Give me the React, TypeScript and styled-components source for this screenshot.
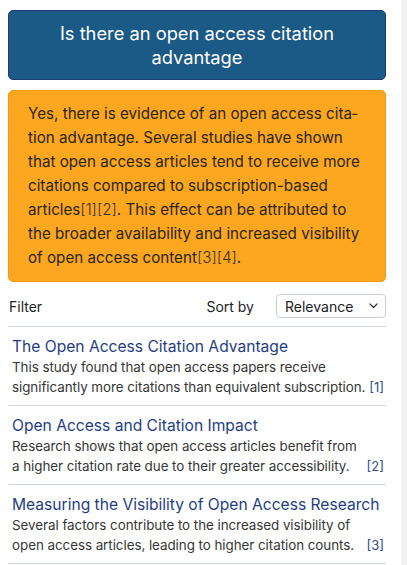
import styled, { createGlobalStyle } from 'styled-components';

const GlobalStyle = createGlobalStyle`
    html, body {
        margin: 0;
        padding: 0;
        background: #ffffff;
    }
    body {
        font-family: Inter, "Noto Sans", "Liberation Sans", sans-serif;
        -webkit-font-smoothing: antialiased;
    }
`;

const Page = styled.div`
    display: flex;
    min-height: 100vh;
`;

const Main = styled.main`
    flex: 1;
    padding: 10px 15px 0 8px;
`;

const Gutter = styled.div`
    width: 6px;
    background: #f2f2f2;
`;

const Question = styled.h1`
    margin: 0;
    padding: 10px 16px;
    background: #1b5987;
    border: 1px solid #1c3d72;
    border-radius: 5px;
    color: #ffffff;
    font-size: 18.3px;
    font-weight: 400;
    line-height: 24px;
    text-align: center;
`;

const Answer = styled.p`
    margin: 10px 0 0;
    padding: 11px 18px 11px 19px;
    background: #fda61f;
    border: 1px solid #f39a12;
    border-radius: 5px;
    color: #2b2612;
    font-size: 15.2px;
    line-height: 24px;
    hyphens: manual;
`;

const Ref = styled.span`
    font-weight: 300;
    color: #3a3320;
`;

const Toolbar = styled.div`
    display: flex;
    align-items: center;
    margin-top: 12px;
    padding-bottom: 8px;
    border-bottom: 1px solid #cfd8e2;
`;

const FilterLabel = styled.span`
    flex: 1;
    font-size: 14px;
    color: #222222;
    padding-left: 1px;
`;

const SortLabel = styled.span`
    font-size: 14px;
    color: #222222;
    margin-right: 22px;
`;

const Select = styled.div`
    display: flex;
    align-items: center;
    justify-content: space-between;
    box-sizing: border-box;
    width: 110px;
    height: 24px;
    padding: 0 7px 0 8px;
    border: 1px solid #c6ced9;
    border-radius: 4px;
    font-size: 14px;
    color: #222222;
`;

const ResultList = styled.ul`
    list-style: none;
    margin: 0;
    padding: 0;
`;

const Result = styled.li`
    padding: 9px 0 8px 4px;
    border-bottom: 1px solid #cfd8e2;
`;

const ResultTitle = styled.a`
    display: block;
    font-size: 15.6px;
    line-height: 21px;
    color: #1f3e82;
    text-decoration: none;
`;

const ResultBody = styled.div`
    display: flex;
    align-items: flex-end;
    gap: 1px;
`;

const Snippet = styled.p`
    flex: 1;
    margin: 0;
    font-size: 13.4px;
    line-height: 20px;
    letter-spacing: -0.05px;
    color: #363636;
`;

const Cite = styled.span`
    font-size: 13px;
    line-height: 20px;
    color: #2d4f8e;
    padding-right: 2px;
`;

const Chevron = () => (
    <svg width="9" height="6" viewBox="0 0 9 6" fill="none">
        <path d="M1 1l3.5 3.5L8 1" stroke="#333" strokeWidth="1.2" strokeLinecap="round" strokeLinejoin="round" />
    </svg>
);

interface IResult {
    id: number,
    title: string,
    snippet: string
}

const results: IResult[] = [
    {
        id: 1,
        title: "The Open Access Citation Advantage",
        snippet: "This study found that open access papers receive significantly more citations than equivalent subscription."
    },
    {
        id: 2,
        title: "Open Access and Citation Impact",
        snippet: "Research shows that open access articles benefit from a higher citation rate due to their greater accessibility."
    },
    {
        id: 3,
        title: "Measuring the Visibility of Open Access Research",
        snippet: "Several factors contribute to the increased visibility of open access articles, leading to higher citation counts."
    }
];

const App = () => {
    return (<>
        <GlobalStyle />
        <Page lang="en">
            <Main>
                <Question>Is there an open access citation advantage</Question>
                <Answer>
                    Yes, there is evidence of an open access cita{'\u00AD'}tion advantage. Several studies have shown
                    that open access articles tend to receive more citations compared to subscription-based
                    articles<Ref>[1][2]</Ref>. This effect can be attributed to the broader availability and
                    increased visibility of open access content<Ref>[3][4]</Ref>.
                </Answer>
                <Toolbar>
                    <FilterLabel>Filter</FilterLabel>
                    <SortLabel>Sort by</SortLabel>
                    <Select>
                        Relevance
                        <Chevron />
                    </Select>
                </Toolbar>
                <ResultList>
                    {results.map(r =>
                        <Result key={r.id}>
                            <ResultTitle href="#">{r.title}</ResultTitle>
                            <ResultBody>
                                <Snippet>{r.snippet}</Snippet>
                                <Cite>[{r.id}]</Cite>
                            </ResultBody>
                        </Result>)}
                </ResultList>
            </Main>
            <Gutter />
        </Page>
    </>);
}

export default App;
